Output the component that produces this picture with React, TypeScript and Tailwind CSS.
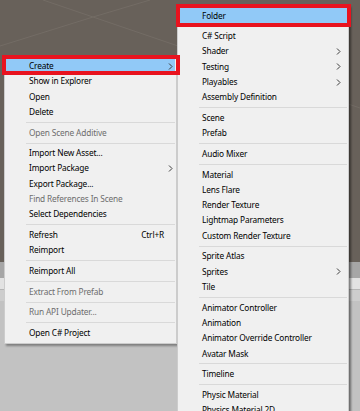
import React from "react";

type Item =
  | "sep"
  | { t: string; arrow?: boolean; dis?: boolean; hi?: boolean; sc?: string };

const leftItems: Item[] = [
  { t: "Create", arrow: true, hi: true },
  { t: "Show in Explorer" },
  { t: "Open" },
  { t: "Delete" },
  "sep",
  { t: "Open Scene Additive", dis: true },
  "sep",
  { t: "Import New Asset..." },
  { t: "Import Package", arrow: true },
  { t: "Export Package..." },
  { t: "Find References In Scene", dis: true },
  { t: "Select Dependencies" },
  "sep",
  { t: "Refresh", sc: "Ctrl+R" },
  { t: "Reimport" },
  "sep",
  { t: "Reimport All" },
  "sep",
  { t: "Extract From Prefab", dis: true },
  "sep",
  { t: "Run API Updater...", dis: true },
  "sep",
  { t: "Open C# Project" },
];

const createItems: Item[] = [
  { t: "Folder", hi: true },
  "sep",
  { t: "C# Script" },
  { t: "Shader", arrow: true },
  { t: "Testing", arrow: true },
  { t: "Playables", arrow: true },
  { t: "Assembly Definition" },
  "sep",
  { t: "Scene" },
  { t: "Prefab" },
  "sep",
  { t: "Audio Mixer" },
  "sep",
  { t: "Material" },
  { t: "Lens Flare" },
  { t: "Render Texture" },
  { t: "Lightmap Parameters" },
  { t: "Custom Render Texture" },
  "sep",
  { t: "Sprite Atlas" },
  { t: "Sprites", arrow: true },
  { t: "Tile" },
  "sep",
  { t: "Animator Controller" },
  { t: "Animation" },
  { t: "Animator Override Controller" },
  { t: "Avatar Mask" },
  "sep",
  { t: "Timeline" },
  "sep",
  { t: "Physic Material" },
  { t: "Physics Material 2D" },
];

function Chevron() {
  return (
    <svg width="5" height="7" viewBox="0 0 5 7" className="shrink-0">
      <path d="M1 0.5 L4 3.5 L1 6.5" fill="none" stroke="#3c3c3c" strokeWidth="1" />
    </svg>
  );
}

// one menu column, windows 10 style
function Menu({ items, arrowPad }: { items: Item[]; arrowPad: string }) {
  return (
    <div className="flex flex-col py-[2.5px]">
      {items.map((it, i) => {
        if (it === "sep") {
          return (
            <div key={i} className="h-[5.35px] flex items-center pl-[21px] pr-[1px]">
              <div className="h-px w-full bg-[#d9d9d9]"></div>
            </div>
          );
        }
        return (
          <div
            key={i}
            className={`h-[15.3px] flex items-center pl-[23px] mx-[1px] ${arrowPad} ${it.hi ? "bg-[#91c9f7]" : ""} ${it.dis ? "text-[#6d6d6d]" : "text-black"}`}
          >
            <span className="flex-1 whitespace-nowrap leading-none">{it.t}</span>
            {it.sc && <span className="mr-[9px] leading-none">{it.sc}</span>}
            {it.arrow && <Chevron />}
          </div>
        );
      })}
    </div>
  );
}

export default function App() {
  return (
    <div className="relative w-[360px] h-[411px] overflow-hidden flex flex-col bg-[#c2c2c2] font-['Noto_Sans','Open_Sans',sans-serif] text-[8.3px] tracking-[-0.15px]">
      {/* scene view behind the menus */}
      <div className="h-[262px] shrink-0 bg-[#68615a]">
        <svg width="360" height="262" viewBox="0 0 360 262">
          <path d="M43 0 L93 17 L360 108" stroke="#736c65" strokeWidth="1" fill="none" />
          <path d="M0 46 L93 17 L150 0" stroke="#736c65" strokeWidth="1" fill="none" />
        </svg>
      </div>
      <div className="h-[16px] shrink-0 bg-[#a6a6a6]"></div>
      <div className="h-[12px] shrink-0 bg-[#e2e2e2] border-b border-[#b5b5b5]"></div>
      <div className="h-[11px] shrink-0 bg-[#cdcdcd]"></div>
      <div className="flex-1 bg-[#c2c2c2]"></div>

      {/* context menu */}
      <div className="absolute left-[4px] top-[55px] w-[173px] bg-[#f0f0f0] border border-[#cccccc] shadow-[2px_2px_2px_rgba(0,0,0,0.35)]">
        <Menu items={leftItems} arrowPad="pr-[2px]" />
      </div>

      {/* Create submenu */}
      <div className="absolute left-[177px] top-[4.5px] w-[172px] h-[420px] bg-[#f0f0f0] border border-[#cccccc] shadow-[2px_2px_2px_rgba(0,0,0,0.45)]">
        <Menu items={createItems} arrowPad="pr-[6px]" />
      </div>

      {/* red highlight boxes */}
      <div className="absolute left-[2px] top-[55px] w-[178px] h-[20px] border-[4px] border-[#e8131f]"></div>
      <div className="absolute left-[176px] top-[4px] w-[175px] h-[23px] border-[4px] border-[#e8131f]"></div>
    </div>
  );
}
